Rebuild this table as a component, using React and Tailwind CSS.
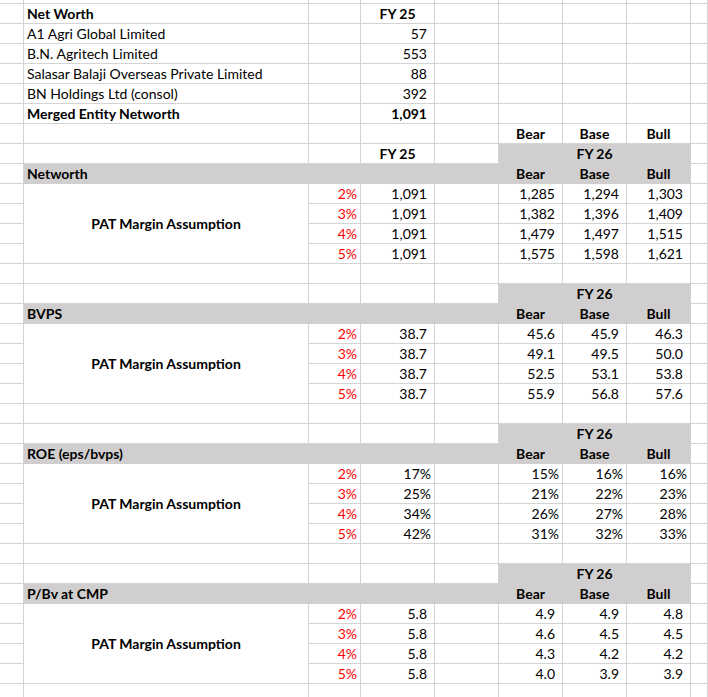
import React from "react";

const sections = [
  {
    title: "Networth",
    fy25: ["1,091", "1,091", "1,091", "1,091"],
    bear: ["1,285", "1,382", "1,479", "1,575"],
    base: ["1,294", "1,396", "1,497", "1,598"],
    bull: ["1,303", "1,409", "1,515", "1,621"],
  },
  {
    title: "BVPS",
    fy25: ["38.7", "38.7", "38.7", "38.7"],
    bear: ["45.6", "49.1", "52.5", "55.9"],
    base: ["45.9", "49.5", "53.1", "56.8"],
    bull: ["46.3", "50.0", "53.8", "57.6"],
  },
  {
    title: "ROE (eps/bvps)",
    pct: true,
    fy25: ["17%", "25%", "34%", "42%"],
    bear: ["15%", "21%", "26%", "31%"],
    base: ["16%", "22%", "27%", "32%"],
    bull: ["16%", "23%", "28%", "33%"],
  },
  {
    title: "P/Bv at CMP",
    fy25: ["5.8", "5.8", "5.8", "5.8"],
    bear: ["4.9", "4.6", "4.3", "4.0"],
    base: ["4.9", "4.5", "4.2", "3.9"],
    bull: ["4.8", "4.5", "4.2", "3.9"],
  },
];

const companies = [
  ["A1 Agri Global Limited", "57"],
  ["B.N. Agritech Limited", "553"],
  ["Salasar Balaji Overseas Private Limited", "88"],
  ["BN Holdings Ltd (consol)", "392"],
];

// one spreadsheet cell; gray cells hide the gridlines like an Excel fill
function Cell({ children, gray, className = "" }) {
  return (
    <div
      className={`flex items-end pb-[2px] border-r border-b whitespace-nowrap overflow-hidden leading-[15px] ${
        gray ? "bg-[#d0cece] border-[#d0cece]" : "border-[#d4d4d4]"
      } ${className}`}
    >
      {children}
    </div>
  );
}

const L = "pl-[3px]";
const N = "justify-end pr-[7px]";
const P = "justify-end pr-[3px]";
const M = "justify-center";

function Blank({ n = 9 }) {
  return Array.from({ length: n }).map((_, i) => <Cell key={i} />);
}

function Section({ s, first }) {
  const num = s.pct ? P : N;
  return (
    <>
      {first ? (
        <>
          {/* Bear / Base / Bull above the FY 26 block */}
          <Cell />
          <Cell />
          <Cell />
          <Cell />
          <Cell />
          <Cell className={`${M} font-bold`}>Bear</Cell>
          <Cell className={`${M} font-bold`}>Base</Cell>
          <Cell className={`${M} font-bold`}>Bull</Cell>
          <Cell />
        </>
      ) : (
        <Blank />
      )}

      {/* FY row */}
      <Cell />
      <Cell />
      <Cell />
      <Cell className={`${M} font-bold`}>{first ? "FY 25" : ""}</Cell>
      <Cell />
      <Cell gray className={`col-span-3 ${M} font-bold`}>
        FY 26
      </Cell>
      <Cell />

      {/* title row */}
      <Cell />
      <Cell gray className={`${L} font-bold`}>
        {s.title}
      </Cell>
      <Cell gray />
      <Cell gray />
      <Cell gray />
      <Cell gray className={`${M} font-bold`}>Bear</Cell>
      <Cell gray className={`${M} font-bold`}>Base</Cell>
      <Cell gray className={`${M} font-bold`}>Bull</Cell>
      <Cell />

      {/* data rows */}
      {[0, 1, 2, 3].map((i) => (
        <React.Fragment key={i}>
          <Cell />
          {i === 0 && (
            <Cell className="row-span-4 !items-center !pb-0 justify-center font-bold">
              PAT Margin Assumption
            </Cell>
          )}
          <Cell className={`${P} text-[#ff0000]`}>{i + 2}%</Cell>
          <Cell className={num}>{s.fy25[i]}</Cell>
          <Cell />
          <Cell className={num}>{s.bear[i]}</Cell>
          <Cell className={num}>{s.base[i]}</Cell>
          <Cell className={num}>{s.bull[i]}</Cell>
          <Cell />
        </React.Fragment>
      ))}
    </>
  );
}

export default function App() {
  return (
    <div
      className="h-[697px] w-[708px] overflow-hidden bg-white text-black text-[14px]"
      style={{ fontFamily: "Lato, 'Open Sans', sans-serif" }}
    >
      <div className="grid grid-cols-[24px_285px_52px_74px_64px_64px_64px_64px_1fr] grid-rows-[4px] auto-rows-[20px]">
        {/* partial top row */}
        {Array.from({ length: 9 }).map((_, i) => (
          <div key={i} className="border-r border-b border-[#d4d4d4]" />
        ))}

        <Cell />
        <Cell className={`${L} font-bold`}>Net Worth</Cell>
        <Cell />
        <Cell className={`${M} font-bold`}>FY 25</Cell>
        <Blank n={5} />

        {companies.map(([name, v]) => (
          <React.Fragment key={name}>
            <Cell />
            <Cell className={L}>{name}</Cell>
            <Cell />
            <Cell className={N}>{v}</Cell>
            <Blank n={5} />
          </React.Fragment>
        ))}

        <Cell />
        <Cell className={`${L} font-bold`}>Merged Entity Networth</Cell>
        <Cell />
        <Cell className={`${N} font-bold`}>1,091</Cell>
        <Blank n={5} />

        {sections.map((s, i) => (
          <Section key={s.title} s={s} first={i === 0} />
        ))}

        <Blank />
      </div>
    </div>
  );
}
